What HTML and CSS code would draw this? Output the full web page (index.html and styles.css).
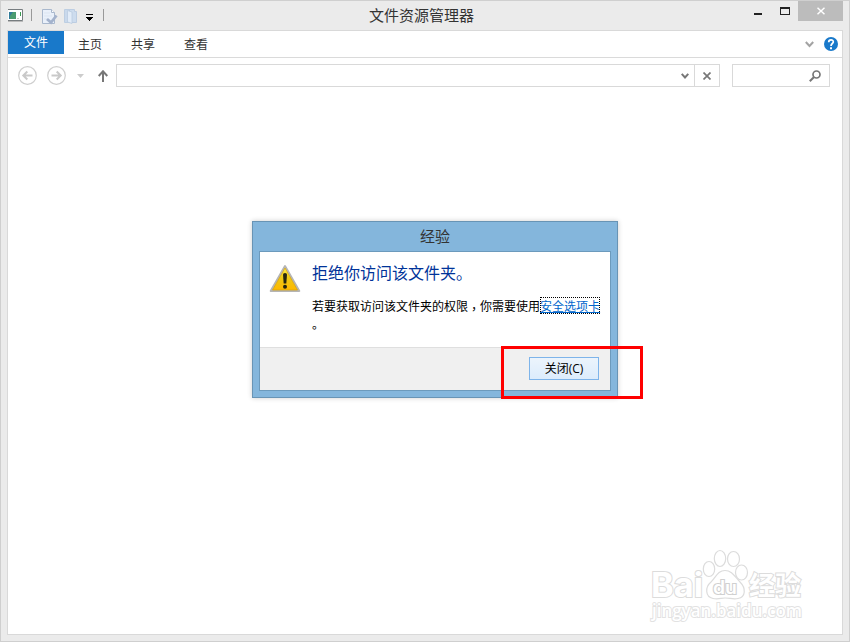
FILE: index.html
```html
<!DOCTYPE html>
<html lang="zh-CN">
<head>
<meta charset="utf-8">
<title>文件资源管理器</title>
<link rel="stylesheet" href="styles.css">
</head>
<body>
<div class="window">
  <header class="titlebar">
    <div class="quick">
      <svg class="q-app" width="15" height="13" viewBox="0 0 15 13"><path d="M0 .5h14.500v11H0" fill="#fff" stroke="#777d80"/><path d="M0 12.500h15" stroke="#bbb"/><rect x="1" y="3" width="7" height="7" fill="#317b99"/><path d="M2 10V7l3-4h3v7z" fill="#4b9b70"/><path d="M9 9.500h2" stroke="#c8c8c8"/><path d="M12.500 3v4" stroke="#3b9b52"/></svg>
      <i class="sep"></i>
      <svg class="q-prop" width="16" height="17" viewBox="0 0 16 17"><path d="M.5 1.500h9l3 3v11H.5z" fill="#e9f0fa" stroke="#a9b8cd"/><path d="M9.500 1.500v3h3" fill="#fff" stroke="#a9b8cd"/><path d="M2 5h6M2 8h8M2 11h3" stroke="#dbe5f1"/><path d="M5 11l4 3.500 5.500-7" fill="none" stroke="#a3b2cc" stroke-width="2.800"/></svg>
      <svg class="q-folder" width="13" height="16" viewBox="0 0 13 16"><path d="M.5 1.500h7v13h-7z" fill="#c9d9ec" stroke="#bdcee2"/><path d="M5.500 1.500h5v2h2v11h-7z" fill="#cddcee" stroke="#bccde2"/><path d="M3.500 2.500L8 4v11.500L3.500 14z" fill="#e2ecf8" stroke="#bacbe0" stroke-width=".8"/></svg>
      <svg class="q-more" width="7" height="7" viewBox="0 0 7 7"><path d="M0 0h7v1H0zM0 3h7v1H6v1H5v1H4v1H3V6H2V5H1V4H0z" fill="#000" shape-rendering="crispEdges"/></svg>
      <i class="sep"></i>
    </div>
    <h1>文件资源管理器</h1>
    <div class="controls">
      <svg width="8" height="20" viewBox="0 0 8 20"><path d="M0 12h8v2H0z" fill="#222"/></svg>
      <svg class="max" width="10" height="20" viewBox="0 0 10 20"><path d="M0 6h10v8H0zM1 8v5h8V8z" fill="#222" fill-rule="evenodd"/></svg>
      <div class="close"><svg width="8" height="8" viewBox="0 0 8 8"><path d="M.5.8l7 6.400M7.500.8L.5 7.200" stroke="#fff" stroke-width="1.500"/></svg></div>
    </div>
  </header>
  <main class="client">
    <nav class="tabs">
      <span class="tab file">文件</span><span class="tab">主页</span><span class="tab">共享</span><span class="tab">查看</span>
      <svg class="chev" width="9" height="7" viewBox="0 0 9 7"><path d="M.8 1l3.700 4L8.200 1" fill="none" stroke="#a3a3a3" stroke-width="2"/></svg>
      <svg class="help" width="14" height="14" viewBox="0 0 14 14"><circle cx="7" cy="7" r="7" fill="#1979ca"/><path d="M4.700 5.200C4.700 2 9.400 2.200 9.300 4.900 9.200 6.600 7 6.500 7 9" fill="none" stroke="#fff" stroke-width="1.700"/><path d="M6 10.300h2v2H6z" fill="#fff"/></svg>
    </nav>
    <div class="navbar">
      <svg width="19" height="19" viewBox="0 0 19 19"><circle cx="9.500" cy="9.500" r="8.800" fill="none" stroke="#cfcfcf" stroke-width="1.200"/><path d="M14.500 9.500H5.500M9.300 5.500l-4 4 4 4" fill="none" stroke="#c9c9c9" stroke-width="2"/></svg>
      <svg class="fwd" width="19" height="19" viewBox="0 0 19 19"><circle cx="9.500" cy="9.500" r="8.800" fill="none" stroke="#cfcfcf" stroke-width="1.200"/><path d="M4.500 9.500h9M9.700 5.500l4 4-4 4" fill="none" stroke="#c9c9c9" stroke-width="2"/></svg>
      <svg class="hist" width="7" height="4" viewBox="0 0 7 4"><path d="M0 0h7L3.500 4z" fill="#ccc"/></svg>
      <svg class="up" width="10" height="12" viewBox="0 0 10 12"><path d="M5 12V1.500M.7 6L5 1.300 9.300 6" fill="none" stroke="#777" stroke-width="2"/></svg>
      <div class="address">
        <svg class="drop" width="8" height="6" viewBox="0 0 8 6"><path d="M.7.8L4 4.500 7.300.8" fill="none" stroke="#777" stroke-width="2"/></svg>
        <div class="stop"><svg width="8" height="8" viewBox="0 0 8 8"><path d="M.5.5l7 7M7.500.5l-7 7" stroke="#777" stroke-width="1.700"/></svg></div>
      </div>
      <div class="search"><svg width="12" height="12" viewBox="0 0 12 12"><circle cx="7.500" cy="4.500" r="3.500" fill="none" stroke="#777" stroke-width="1.700"/><path d="M5 7L.8 11.200" stroke="#777" stroke-width="2"/></svg></div>
    </div>
  </main>
</div>

<section class="dialog">
  <div class="dialog-title">经验</div>
  <div class="dialog-body">
    <div class="message">
      <svg class="warn" width="32" height="29" viewBox="0 0 32 29"><defs><linearGradient id="gold" x1="0" y1="0" x2="0" y2="1"><stop offset="0" stop-color="#fff04a"/><stop offset=".45" stop-color="#edc915"/><stop offset="1" stop-color="#ffb800"/></linearGradient></defs><path d="M16 2L30.300 27H1.700z" fill="#ddd" stroke="#b5b5b5" stroke-width="2" stroke-linejoin="round"/><path d="M16 4L28.500 26h-25z" fill="url(#gold)" stroke="#d9a40c" stroke-width=".8"/><path d="M14 10.500q0-1.500 2-1.500t2 1.500l-.7 9h-2.600z" fill="#252510"/><circle cx="16" cy="22.700" r="2" fill="#252510"/></svg>
      <div class="copy">
        <h2>拒绝你访问该文件夹。</h2>
        <p>若要获取访问该文件夹的权限<span class="comma" lang="zh-TW">，</span>你需要使用<a class="link">安全选项卡</a><br>。</p>
      </div>
    </div>
    <footer class="actions"><button>关闭(C)</button></footer>
  </div>
</section>
<div class="highlight"></div>

<svg class="watermark" width="160" height="78" viewBox="0 0 160 78">
  <g class="wm-shape">
    <ellipse cx="29" cy="29" rx="5.700" ry="7.500"/><ellipse cx="40" cy="18.500" rx="5.700" ry="8"/><ellipse cx="53.500" cy="19" rx="6" ry="7.500"/><ellipse cx="61.500" cy="32.500" rx="6" ry="7.500"/>
    <path d="M45 30.500C38 30.500 36 37 31 42C25 47 25 57 33 58.500C39 59.500 41 58 45 58C50 58 53 59.500 58 58.500C66 57 66 48 60 42C55 37 52 30.500 45 30.500z"/>
  </g>
  <g class="wm-text">
    <text class="logo" x="-29" y="57" font-size="34" textLength="52" lengthAdjust="spacingAndGlyphs">Bai</text>
    <text class="logo du" x="33" y="54" font-size="18" textLength="24" lengthAdjust="spacingAndGlyphs">du</text>
    <text x="69" y="55" font-size="26" textLength="52" lengthAdjust="spacingAndGlyphs">经验</text>
    <text class="url" x="-28" y="77" font-size="18" textLength="150" lengthAdjust="spacingAndGlyphs">jingyan.baidu.com</text>
  </g>
</svg>
</body>
</html>
```
FILE: styles.css
```css
* { box-sizing: border-box; }
body {
  margin: 0;
  width: 850px;
  height: 642px;
  overflow: hidden;
  font: 12px/18px "Noto Sans CJK SC", sans-serif;
  color: #333;
}
svg { display: block; flex: none; }
h1, h2, p { margin: 0; font-weight: 400; }

.window {
  height: 642px;
  display: flex;
  flex-direction: column;
  background: #ebebeb;
  border: 1px solid #cfcfcf;
  padding: 0 6px 6px;
}
.titlebar {
  height: 29px;
  flex: none;
  display: grid;
  grid-template-columns: 362px auto 1fr;
}
.titlebar h1 { font-size: 15px; line-height: 28px; }
.quick { display: flex; align-items: flex-start; padding-left: 1px; }
.q-app { margin-top: 8px; }
.sep { width: 1px; height: 12px; margin: 8px 0 0 8px; background: #999; }
.q-prop { margin: 7px 0 0 10px; }
.q-folder { margin: 7px 0 0 6px; }
.q-more { margin: 13px 10px 0 9px; }
.q-more + .sep { margin-left: 0; }
.controls { display: flex; justify-content: flex-end; }
.max { margin: 0 8px 0 18px; }
.close {
  width: 45px;
  height: 20px;
  display: flex;
  align-items: center;
  justify-content: center;
  background: #bcbcbc;
}
.client {
  flex: 1;
  background: #fff;
  border: 1px solid #d9d9d9;
}
.tabs {
  display: flex;
  height: 27px;
  border-bottom: 1px solid #dadada;
}
.tab { width: 53px; padding-right: 1px; text-align: center; line-height: 25px; }
.tab.file {
  width: 56px;
  height: 23px;
  padding: 0;
  line-height: 22px;
  background: #1979ca;
  color: #fff;
}
.chev { margin: 10px 10px 0 auto; }
.help { margin: 6px 4px 0 0; }
.navbar {
  display: flex;
  align-items: center;
  height: 35px;
  padding: 0 12px 0 10px;
}
.fwd { margin-left: 10px; }
.hist { margin-left: 11px; }
.up { margin: 0 8px 0 14px; }
.address, .search {
  display: flex;
  align-items: center;
  justify-content: flex-end;
  flex: none;
  height: 23px;
  border: 1px solid #d9d9d9;
}
.address { width: 604px; }
.drop { margin-right: 5px; }
.stop {
  width: 25px;
  height: 21px;
  display: flex;
  align-items: center;
  justify-content: center;
  border-left: 1px solid #d9d9d9;
}
.search { width: 98px; margin-left: 12px; padding-right: 8px; }

.dialog {
  position: absolute;
  left: 252px;
  top: 221px;
  width: 366px;
  height: 177px;
  display: flex;
  flex-direction: column;
  padding: 0 6px 6px;
  background: #84b6dc;
  border: 1px solid #6894b5;
  box-shadow: 0 0 5px rgba(0, 0, 0, .2);
}
.dialog-title {
  height: 29px;
  flex: none;
  font-size: 15px;
  line-height: 28px;
  text-align: center;
}
.dialog-body {
  flex: 1;
  display: flex;
  flex-direction: column;
  background: #fff;
  border: 1px solid #6c9abc;
}
.message { flex: 1; display: flex; padding: 12px 0 0 9px; }
.copy { margin-left: 11px; white-space: nowrap; color: #000; }
.copy h2 { font-size: 16px; line-height: 17px; color: #039; }
.copy p { margin-top: 16px; }
.comma {
  position: relative;
  top: 3px;
  line-height: 1;
  font-family: "Noto Sans CJK TC", sans-serif;
}
.link {
  display: inline-block;
  height: 17px;
  line-height: 17px;
  color: #06c;
  text-decoration: underline;
  outline: 1px dotted #000;
  outline-offset: -1px;
}
.actions {
  height: 43px;
  display: flex;
  justify-content: flex-end;
  padding: 9px 11px 0 0;
  background: #f0f0f0;
  border-top: 1px solid #dfdfdf;
}
.actions button {
  width: 70px;
  height: 23px;
  padding: 0;
  font: 12px/18px "Open Sans", "Noto Sans CJK SC", sans-serif;
  color: #000;
  background: linear-gradient(#ecf4fc, #dcecfc);
  border: 1px solid #7eb4ea;
}
.highlight {
  position: absolute;
  left: 501px;
  top: 346px;
  width: 142px;
  height: 53px;
  border: 3px solid #f00;
}
.watermark {
  position: absolute;
  left: 680px;
  top: 540px;
  overflow: visible;
}
.wm-shape, .wm-text { fill: #fff; stroke: #dcdcdc; stroke-width: 1.2; }
.wm-text {
  font-family: "Open Sans", "Noto Sans CJK SC", sans-serif;
  font-weight: 700;
  stroke-width: 2;
  paint-order: stroke;
}
.logo { font-family: Inter, sans-serif; }
.du { font-weight: 600; stroke: #d0d0d0; }
.url { font-weight: 600; stroke: #e2e2e2; }
```
